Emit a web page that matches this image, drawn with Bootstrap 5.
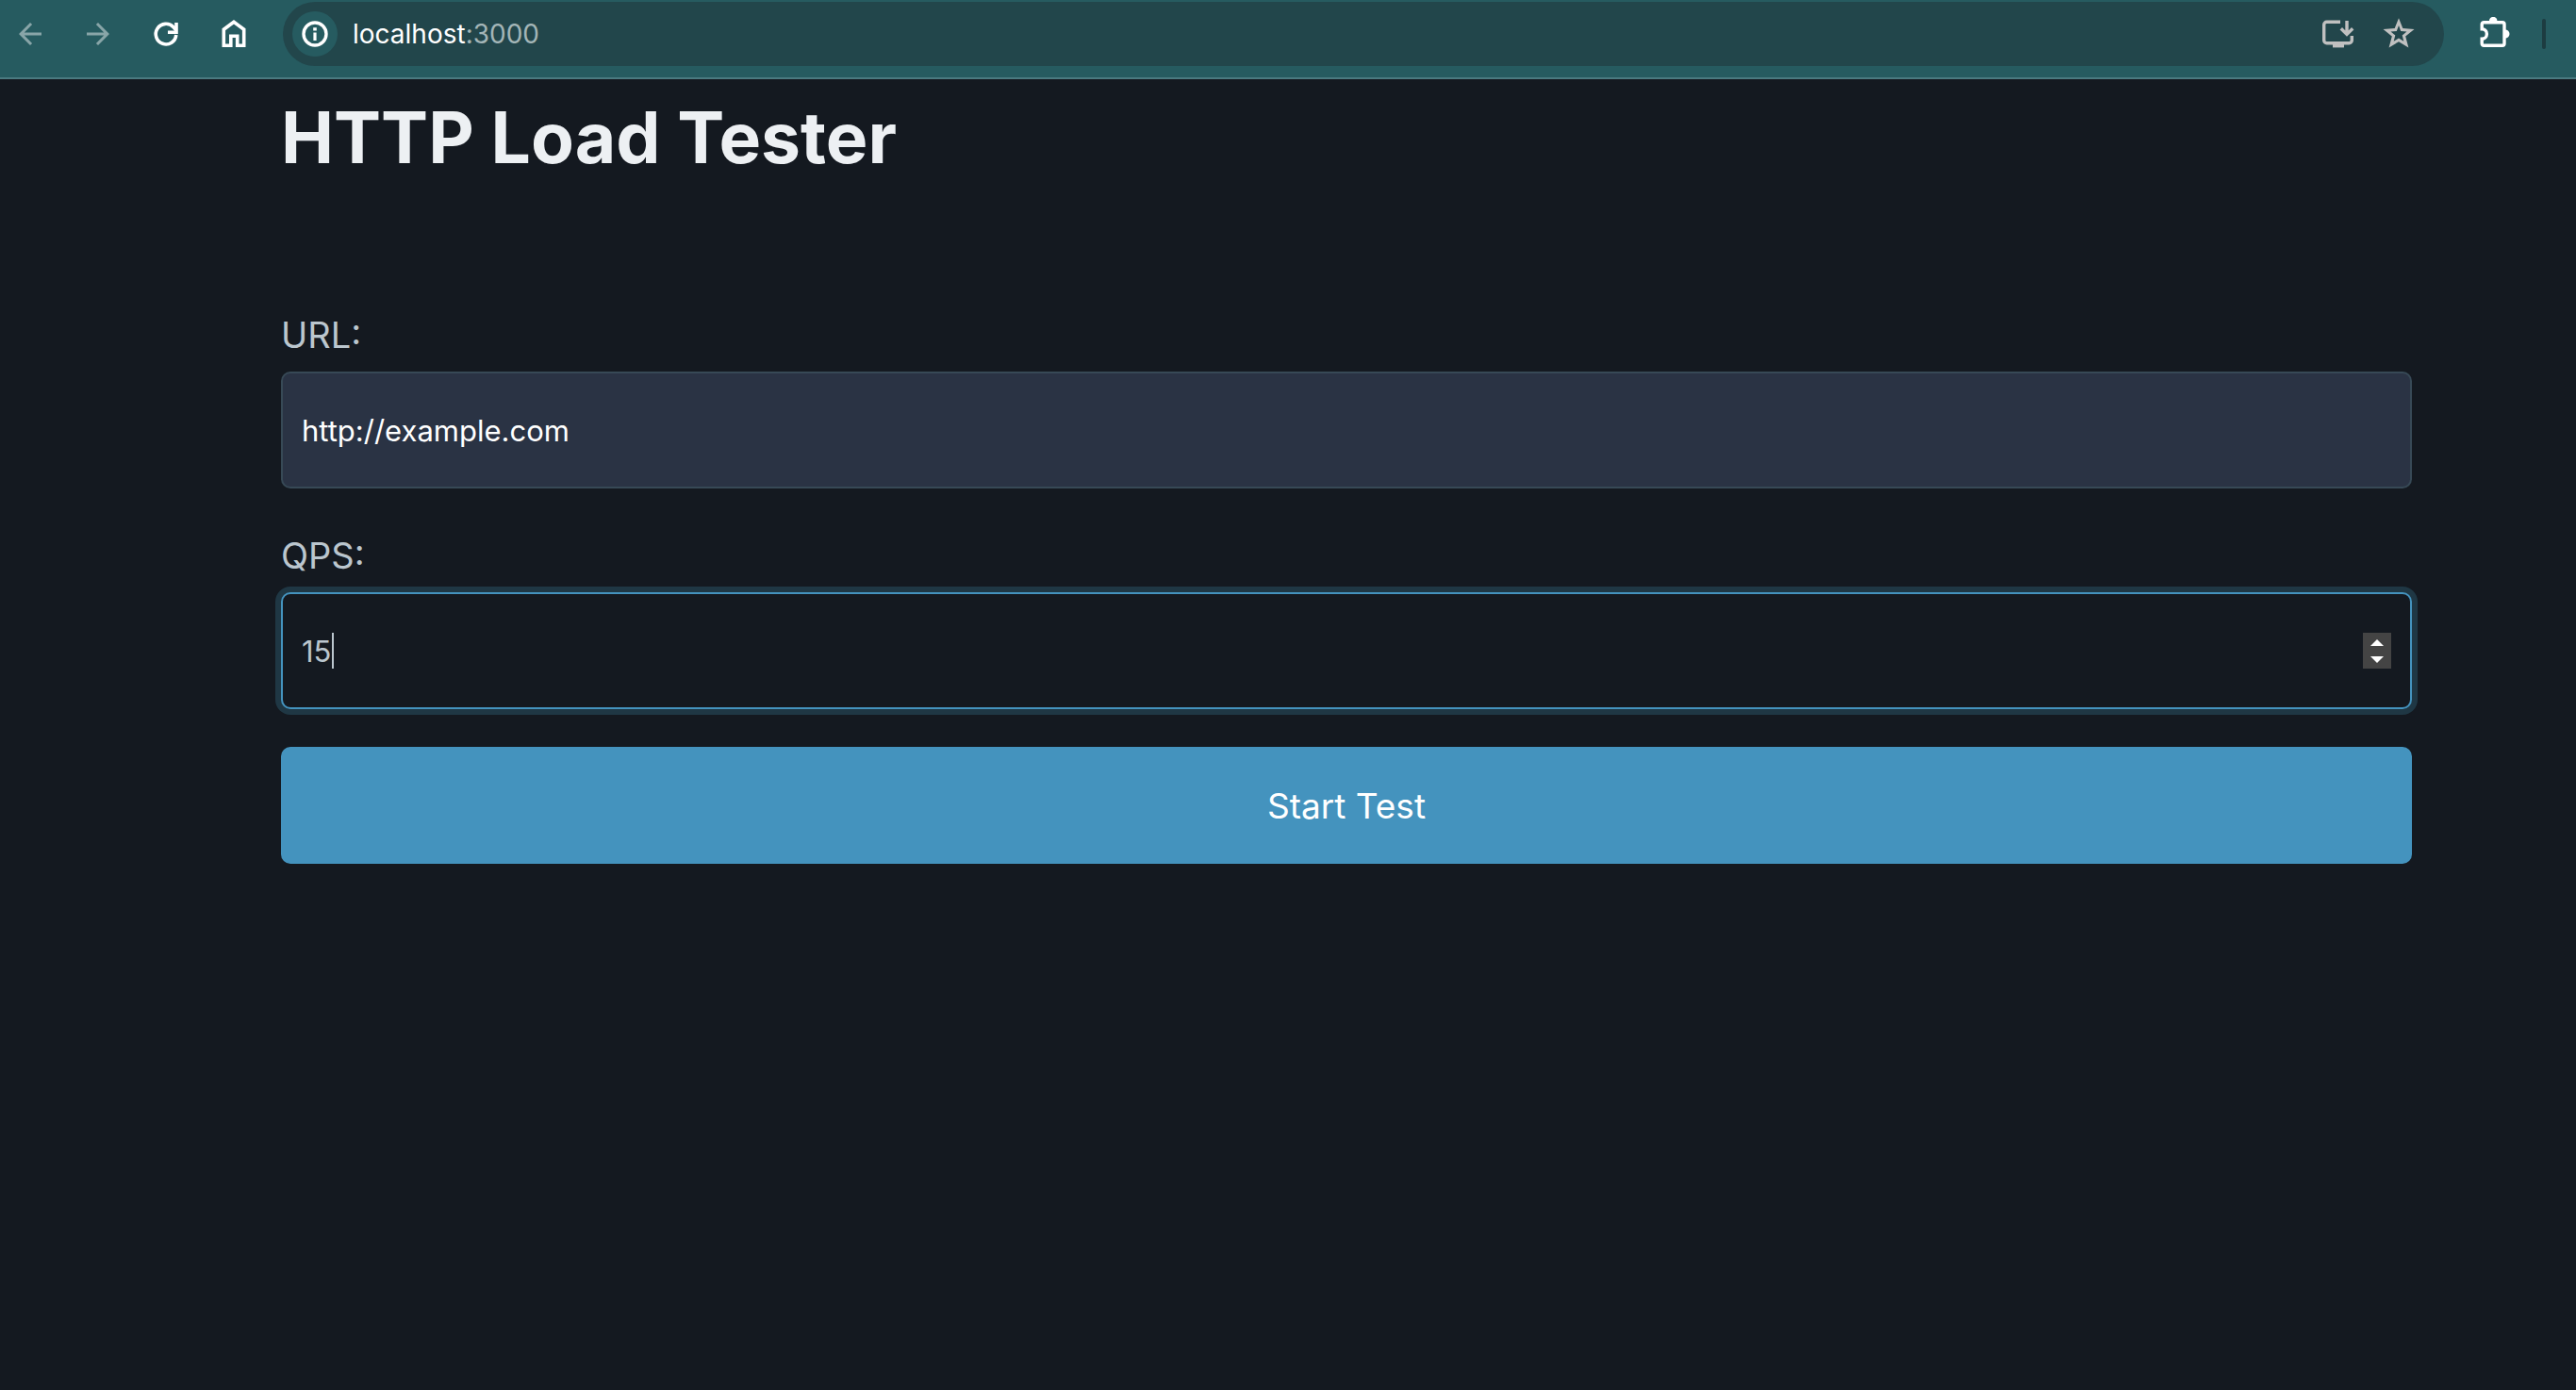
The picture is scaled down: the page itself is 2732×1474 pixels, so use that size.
<!DOCTYPE html>
<html lang="en" data-bs-theme="dark">
<head>
<meta charset="utf-8">
<meta name="viewport" content="width=device-width, initial-scale=1">
<title>HTTP Load Tester</title>
<link href="https://cdn.jsdelivr.net/npm/bootstrap@5.3.0/dist/css/bootstrap.min.css" rel="stylesheet">
<style>
  body { background: #141920; color: #bbc6ce; font-family: Inter, "Liberation Sans", sans-serif; }

  /* browser toolbar */
  .browser-bar { background: #265b60; border-bottom: 2px solid #4a7a80; padding: 2px 32px 12px 14px; }
  .browser-bar svg { width: 36px; height: 36px; display: block; }
  .tool-btn { padding: 0; border: 0; background: none; color: #fff; }
  .tool-btn:disabled { color: #fff; opacity: .45; }
  .nav-tools { gap: 36px; margin-right: 34px; }
  .omnibox { height: 68px; border-radius: 34px; background: #22464b; padding: 0 30px 0 10px; }
  .site-info { width: 48px; height: 48px; border-radius: 50%; background: #265b60; }
  .address { margin-left: 16px; font-size: 28px; line-height: 36px; color: #a3b5b7; }
  .address span { color: #fff; }
  .page-tools { gap: 28px; color: #c0c0c0; }
  .page-tools .tool-btn { color: inherit; }
  .extensions { margin-left: 34px; }
  .bar-rule { width: 4px; height: 32px; border-radius: 2px; background: #1d3c41; margin-left: 34px; }

  /* page */
  .page-body { padding: 14px 174px 40px 298px; }
  .page-title { font-size: 75px; line-height: 96px; font-weight: 700; color: #edf0f3; margin-bottom: 130px; }
  .field { margin-bottom: 40px; }
  .field-label { font-size: 38px; line-height: 62px; margin-bottom: 8px; color: #bbc6ce; display: block; }
  .field-input { height: 124px; padding: 0 20px; border: 2px solid #374956; border-radius: 10px; background: #2a3344; color: #fff; font-size: 31px; }
  .field-input:focus { background: #2a3344; color: #fff; }
  .field-input.active, .field-input.active:focus { background: #141920; color: #bbc6ce; border-color: #4493be; box-shadow: 0 0 0 6px #1f3744; caret-color: transparent; }
  input[type=number] { appearance: textfield; -moz-appearance: textfield; }
  input[type=number]::-webkit-inner-spin-button { display: none; }
  .text-caret { left: 54px; top: 50%; width: 2px; height: 38px; margin-top: -19px; background: #bbc6ce; }
  .spinner-pair { right: 22px; top: 50%; width: 30px; height: 38px; margin-top: -19px; background: #444; padding: 7px 0 6px; }
  .spinner-pair button { border: 0; padding: 0; background: none; line-height: 0; }
  .start-btn { height: 124px; border: 0; border-radius: 10px; background: #4493be; color: #fff; font-size: 37px; padding: 8px 0 6px; }
  .start-btn:hover { background: #3a86b0; color: #fff; }
</style>
<script src="https://cdn.jsdelivr.net/npm/bootstrap@5.3.0/dist/js/bootstrap.bundle.min.js"></script>
</head>
<body>
<header class="browser-bar d-flex align-items-center">
  <nav class="nav-tools d-flex" aria-label="Browser navigation">
    <button class="tool-btn" type="button" disabled aria-label="Back"><svg viewBox="0 0 24 24" fill="currentColor"><path d="M20 11H7.83l5.59-5.59L12 4l-8 8 8 8 1.41-1.41L7.83 13H20z"/></svg></button>
    <button class="tool-btn" type="button" disabled aria-label="Forward"><svg viewBox="0 0 24 24" fill="currentColor"><path d="M4 11h12.17l-5.59-5.59L12 4l8 8-8 8-1.41-1.41L16.17 13H4z"/></svg></button>
    <button class="tool-btn" type="button" aria-label="Reload"><svg viewBox="0 0 36 36" fill="none" stroke="currentColor" stroke-width="3.6"><path d="M28.8 19A10.8 10.8 0 1 1 26 10.8l3 3.4"/><path d="M20 16.2h10.8M29 17.8V6"/></svg></button>
    <button class="tool-btn" type="button" aria-label="Home"><svg viewBox="0 0 36 36" fill="none" stroke="currentColor" stroke-width="3.6"><path d="M7.3 30.2V13.2L18 5.2l10.7 8v17H21.7V20.3H14.8V30.2Z"/></svg></button>
  </nav>
  <div class="omnibox d-flex align-items-center flex-grow-1">
    <button class="tool-btn site-info d-flex align-items-center justify-content-center" type="button" aria-label="Site information"><svg viewBox="0 0 36 36"><circle cx="18" cy="18" r="12" fill="none" stroke="currentColor" stroke-width="3.4"/><path fill="currentColor" d="M16.400 16.400h3.200v8.600h-3.200zM16.200 11.200h3.600v3.200h-3.600z"/></svg></button>
    <div class="address flex-grow-1" role="textbox" aria-label="Address"><span>localhost</span>:3000</div>
    <div class="page-tools d-flex">
      <button class="tool-btn" type="button" aria-label="Install app"><svg viewBox="0 0 36 36" fill="none" stroke="currentColor" stroke-width="3.4"><path d="M20 5.200H5.700a3 3 0 0 0-3 3v16.600a3 3 0 0 0 3 3H29.300a3 3 0 0 0 3-3V20"/><path d="M27 4v14M20.800 12.200l6.200 6.200 6.200-6.200" stroke-width="3.4"/><path d="M12 28h12v4.400H12z" fill="currentColor" stroke="none"/></svg></button>
      <button class="tool-btn" type="button" aria-label="Bookmark"><svg viewBox="0 0 36 36" fill="currentColor"><path fill-rule="evenodd" d="M18 1.200l4.300 10.800 12.200.9-9.300 7.700 3.200 11.900L18 26.200 7.600 32.500l3.200-11.900-9.300-7.700 12.200-.9ZM18 9l-2.200 6-6.300.6 4.800 4-1.600 6.200L18 22.400l5.300 3.400-1.600-6.200 4.800-4-6.300-.6Z"/></svg></button>
    </div>
  </div>
  <button class="tool-btn extensions" type="button" aria-label="Extensions"><svg viewBox="0 0 36 36"><path d="M7.200 5.700H27a2 2 0 0 1 2 2V28.300a2 2 0 0 1-2 2H7.200a2 2 0 0 1-2-2V23.200a5.200 5.200 0 0 0 0-10.400V7.700a2 2 0 0 1 2-2Z" transform="translate(1 0)" fill="none" stroke="currentColor" stroke-width="3.4"/><path d="M14 4a4.200 4.200 0 0 1 8.400 0zM31 13.500a4.500 4.500 0 0 1 0 9z" fill="currentColor"/></svg></button>
  <div class="bar-rule"></div>
</header>

<main class="page-body">
  <h1 class="page-title">HTTP Load Tester</h1>
  <form>
    <div class="field">
      <label class="field-label" for="url">URL:</label>
      <input class="form-control field-input" type="url" id="url" value="http://example.com">
    </div>
    <div class="field">
      <label class="field-label" for="qps">QPS:</label>
      <div class="position-relative">
        <input class="form-control field-input active" type="number" id="qps" value="15">
        <span class="text-caret position-absolute"></span>
        <div class="spinner-pair position-absolute d-flex flex-column align-items-center justify-content-between">
          <button type="button" aria-label="Increase"><svg width="14" height="7" viewBox="0 0 14 7"><path d="M7 0l7 7H0z" fill="#fff"/></svg></button>
          <button type="button" aria-label="Decrease"><svg width="14" height="7" viewBox="0 0 14 7"><path d="M0 0h14L7 7z" fill="#fff"/></svg></button>
        </div>
      </div>
    </div>
    <button class="btn start-btn w-100" type="submit">Start Test</button>
  </form>
</main>
</body>
</html>
